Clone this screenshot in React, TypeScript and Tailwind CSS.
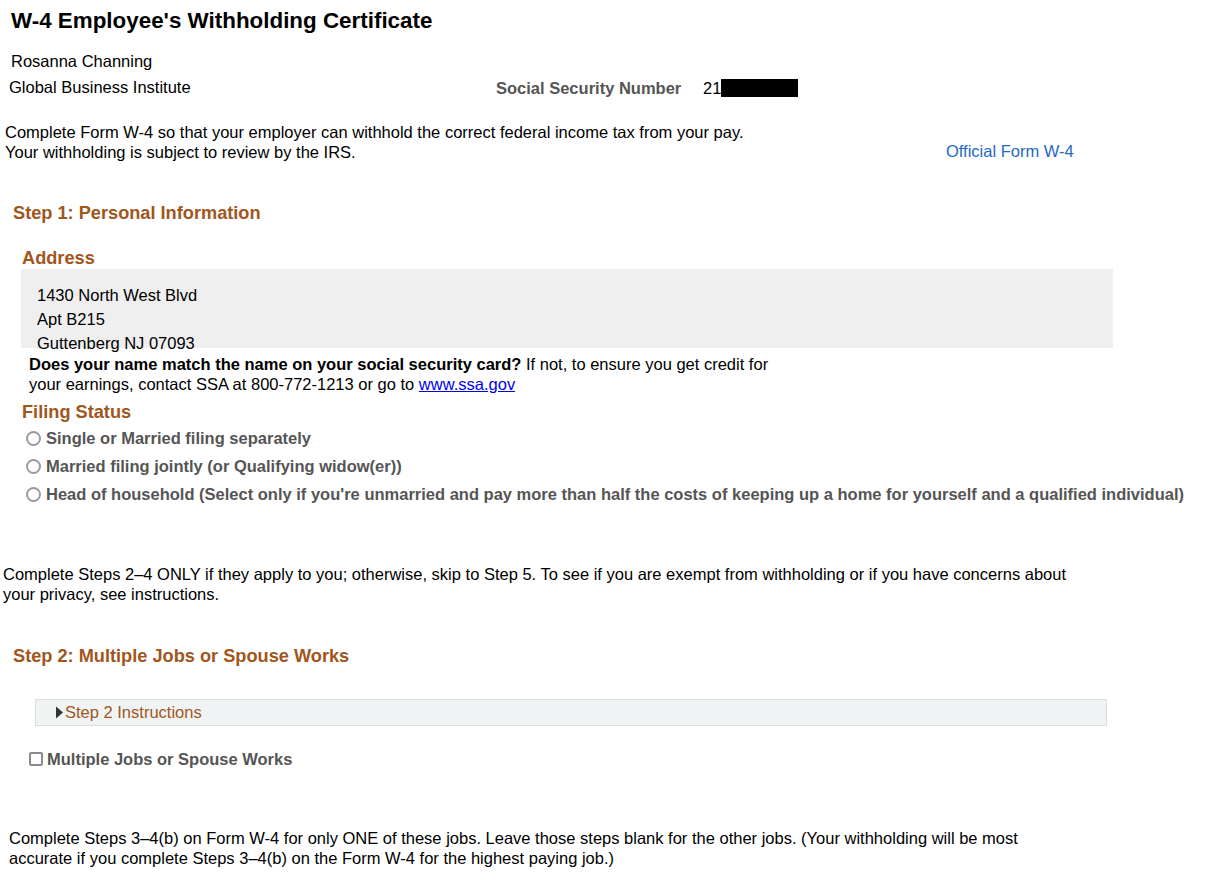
import React from "react";

const brown = "text-[#a0561c]";

function Radio({ label }: { label: string }) {
  return (
    <div className="flex items-center h-[28px] pl-[26px]">
      <span className="inline-block w-[15px] h-[15px] rounded-full border-2 border-[#9a9aa0] bg-white mr-[5px]" />
      <span className="font-bold text-[#555555]">{label}</span>
    </div>
  );
}

export default function App() {
  return (
    <div className="bg-white text-black w-[1212px] min-h-[882px] text-[16.5px]" style={{ fontFamily: '"Liberation Sans", Arial, sans-serif' }}>
      <h1 className="mt-[9px] pl-[11px] text-[22.4px] leading-[24px] font-bold">W-4 Employee's Withholding Certificate</h1>

      <div className="mt-[15px] pl-[11px] leading-[26px]">Rosanna Channing</div>
      <div className="flex items-center h-[26px] leading-[26px] pl-[9px]">
        <div className="w-[487px]">Global Business Institute</div>
        <div className="font-bold text-[#555555] w-[207px] translate-y-[1px]">Social Security Number</div>
        <div className="flex items-center translate-y-[1px]">
          <span>21</span>
          <span className="inline-block w-[77px] h-[18px] bg-black" />
        </div>
      </div>

      <div className="mt-[22px] pl-[5px] flex items-end leading-[20px]">
        <div className="w-[941px]">
          <div>Complete Form W-4 so that your employer can withhold the correct federal income tax from your pay.</div>
          <div>Your withholding is subject to review by the IRS.</div>
        </div>
        <a className="text-[#2369c6] pb-[1px]">Official Form W-4</a>
      </div>

      <h2 className={`mt-[40px] pl-[13px] text-[18.2px] leading-[22px] font-bold ${brown}`}>Step 1: Personal Information</h2>

      <h3 className={`mt-[23px] pl-[22px] text-[18.2px] leading-[22px] font-bold ${brown}`}>Address</h3>
      <div className="ml-[21px] w-[1092px] h-[79px] bg-[#efefef] pt-[14px] pl-[16px] leading-[24px]">
        <div>1430 North West Blvd</div>
        <div>Apt B215</div>
        <div>Guttenberg NJ 07093</div>
      </div>

      <div className="mt-[6px] pl-[29px] leading-[20px]">
        <div><span className="font-bold">Does your name match the name on your social security card?</span> If not, to ensure you get credit for</div>
        <div>your earnings, contact SSA at 800-772-1213 or go to <a className="text-[#0000ee] underline">www.ssa.gov</a></div>
      </div>

      <h3 className={`mt-[7px] pl-[22px] text-[18.2px] leading-[22px] font-bold ${brown}`}>Filing Status</h3>
      <div className="mt-[1px]">
        <Radio label="Single or Married filing separately" />
        <Radio label="Married filing jointly (or Qualifying widow(er))" />
        <Radio label="Head of household (Select only if you're unmarried and pay more than half the costs of keeping up a home for yourself and a qualified individual)" />
      </div>

      <div className="mt-[56px] pl-[3px] leading-[20px]">
        <div>Complete Steps 2–4 ONLY if they apply to you; otherwise, skip to Step 5. To see if you are exempt from withholding or if you have concerns about</div>
        <div>your privacy, see instructions.</div>
      </div>

      <h2 className={`mt-[41px] pl-[13px] text-[18.2px] leading-[22px] font-bold ${brown}`}>Step 2: Multiple Jobs or Spouse Works</h2>

      <div className="mt-[32px] ml-[35px] w-[1072px] h-[27px] bg-[#f0f3f4] border border-[#dddddd] flex items-center pl-[19px]">
        <svg width="9" height="13" viewBox="0 0 9 13" className="mr-[1px]">
          <path d="M1 0.5 L8 6.5 L1 12.5 Z" fill="#333333" />
        </svg>
        <span className="text-[#a0561c]">Step 2 Instructions</span>
      </div>

      <div className="mt-[21px] flex items-center h-[24px] pl-[29px]">
        <span className="inline-block w-[14px] h-[14px] rounded-[2px] border-2 border-[#8a8a90] bg-white mr-[4px]" />
        <span className="font-bold text-[#555555]">Multiple Jobs or Spouse Works</span>
      </div>

      <div className="mt-[57px] pl-[9px] leading-[20px]">
        <div>Complete Steps 3–4(b) on Form W-4 for only ONE of these jobs. Leave those steps blank for the other jobs. (Your withholding will be most</div>
        <div>accurate if you complete Steps 3–4(b) on the Form W-4 for the highest paying job.)</div>
      </div>
    </div>
  );
}
